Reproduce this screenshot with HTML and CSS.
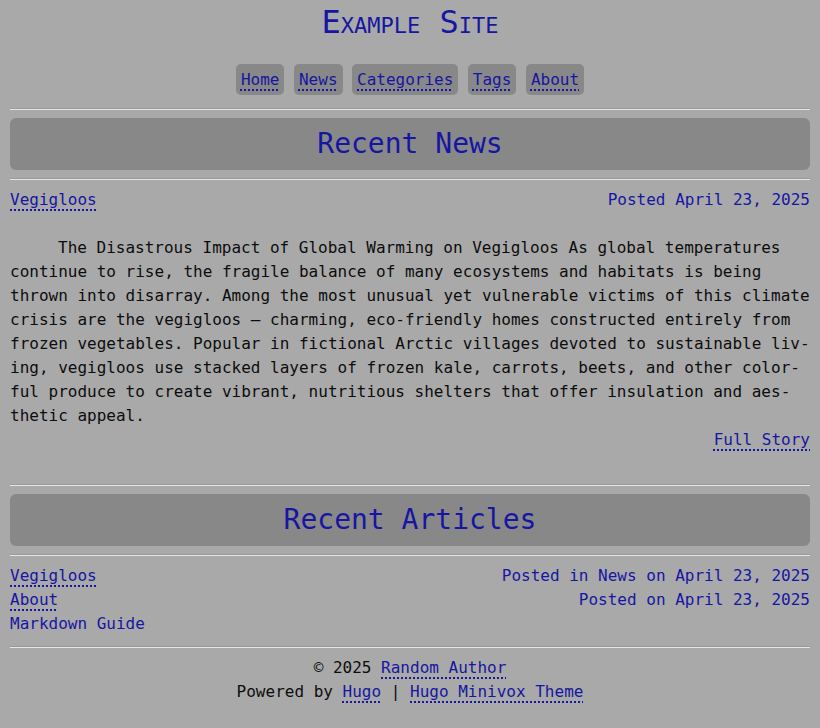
FILE: index.html
```html
<!DOCTYPE html>
<html lang="en">
<head>
<meta charset="utf-8">
<title>Example Site</title>
<link rel="stylesheet" href="styles.css">
</head>
<body>
<header class="site-header">
  <h1 class="site-title"><a href="#">Example Site</a></h1>
  <nav class="nav">
    <a class="nav-item" href="#"><span class="link">Home</span></a>
    <a class="nav-item" href="#"><span class="link">News</span></a>
    <a class="nav-item" href="#"><span class="link">Categories</span></a>
    <a class="nav-item" href="#"><span class="link">Tags</span></a>
    <a class="nav-item" href="#"><span class="link">About</span></a>
  </nav>
</header>
<hr class="rule rule-top">
<h2 class="section-title">Recent News</h2>
<hr class="rule">
<article class="post">
  <div class="row">
    <a class="link" href="#">Vegigloos</a>
    <span class="meta">Posted April 23, 2025</span>
  </div>
  <p class="summary">The Disastrous Impact of Global Warming on Vegigloos As global temperatures continue to rise, the fragile balance of many ecosystems and habitats is being thrown into disarray. Among the most unusual yet vulnerable victims of this climate crisis are the vegigloos – charming, eco-friendly homes constructed entirely from frozen vegetables. Popular in fictional Arctic villages devoted to sustainable liv&shy;ing, vegigloos use stacked layers of frozen kale, carrots, beets, and other color&shy;ful produce to create vibrant, nutritious shelters that offer insulation and aes&shy;thetic appeal.</p>
  <div class="more"><a class="link" href="#">Full Story</a></div>
</article>
<hr class="rule rule-gap">
<h2 class="section-title">Recent Articles</h2>
<hr class="rule">
<ul class="articles">
  <li class="row"><a class="link" href="#">Vegigloos</a><span class="meta">Posted in News on April 23, 2025</span></li>
  <li class="row"><a class="link" href="#">About</a><span class="meta">Posted on April 23, 2025</span></li>
  <li class="row"><span class="plain">Markdown Guide</span></li>
</ul>
<hr class="rule">
<footer class="footer">
  <div>© 2025 <a class="link" href="#">Random Author</a></div>
  <div>Powered by <a class="link" href="#">Hugo</a> | <a class="link" href="#">Hugo Minivox Theme</a></div>
</footer>
</body>
</html>
```

FILE: styles.css
```css
html {
  background: #a9a9a9;
}
body {
  margin: 0;
  padding: 0 10px;
  font-family: "DejaVu Sans Mono", "Liberation Mono", monospace;
  font-size: 16px;
  line-height: 24px;
  color: #0d0d0d;
  background: #a9a9a9;
}
a {
  color: #1616a2;
  text-decoration: none;
}
.link {
  color: #1616a2;
  text-decoration-line: underline;
  text-decoration-style: dotted;
  text-decoration-thickness: 2px;
  text-underline-offset: 4px;
  text-decoration-color: #1616a2;
}
.site-header {
  text-align: center;
  padding-top: 2px;
}
.site-title {
  margin: 0;
  font-size: 32px;
  line-height: 40px;
  font-weight: normal;
  font-variant: small-caps;
}
.site-title a {
  color: #1616a2;
}
.nav {
  margin-top: 22px;
  display: flex;
  justify-content: center;
  gap: 9.5px;
}
.nav-item {
  background: #888;
  border-radius: 5px;
  padding: 4px 5px 3px;
  line-height: 24px;
}
.rule {
  margin: 8px 0;
  border: 0;
  border-top: 1px solid #999;
  border-bottom: 1px solid #e6e6e6;
  height: 0;
}
.rule-top {
  margin-top: 13px;
}
.rule-gap {
  margin-top: 32px;
}
.section-title {
  margin: 0;
  background: #888;
  border-radius: 6px;
  text-align: center;
  font-size: 28px;
  line-height: 52px;
  height: 52px;
  font-weight: normal;
  color: #1616a2;
}
.row {
  display: flex;
  justify-content: space-between;
  line-height: 24px;
}
.meta, .plain {
  color: #1616a2;
}
.summary {
  margin: 24px 0 0;
  text-indent: 48px;
  hyphens: manual;
}
.more {
  text-align: right;
}
.articles {
  list-style: none;
  margin: 0 0 10px;
  padding: 0;
}
.footer {
  text-align: center;
  padding-bottom: 24px;
}
```
